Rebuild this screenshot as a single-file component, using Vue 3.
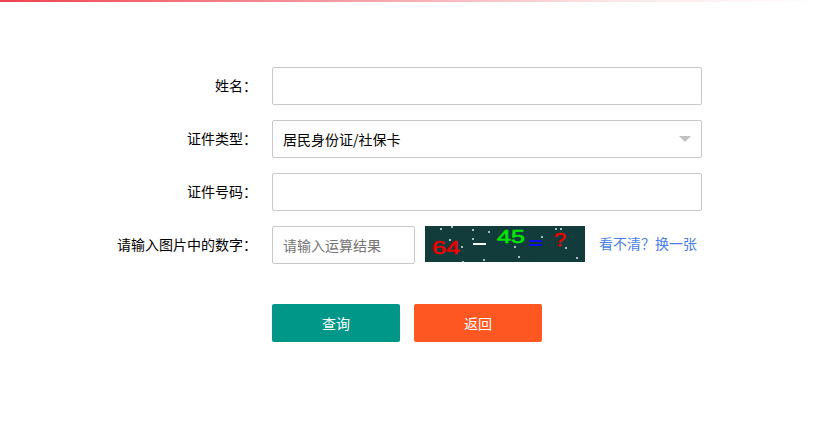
<script setup>
const dots = [
  [15, 2], [26, 0], [47, 3], [63, 5], [24, 13], [47, 12], [36, 20], [116, 10],
  [130, 2], [135, 2], [140, 21], [89, 20], [93, 30], [151, 31], [37, 35], [58, 33]
].map(([x, y], id) => ({ id, x, y }))
</script>

<template>
  <div class="page">
    <div class="topbar"></div>
    <form class="form" @submit.prevent>
      <div class="row">
        <label class="label">姓名：</label>
        <input class="field" type="text" />
      </div>
      <div class="row">
        <label class="label">证件类型：</label>
        <div class="field select">
          <span>居民身份证/社保卡</span>
          <i class="caret"></i>
        </div>
      </div>
      <div class="row">
        <label class="label">证件号码：</label>
        <input class="field" type="text" />
      </div>
      <div class="row">
        <label class="label">请输入图片中的数字：</label>
        <input class="field captcha-input" type="text" placeholder="请输入运算结果" />
        <svg class="captcha" width="160" height="36" viewBox="0 0 160 36">
          <rect width="160" height="36" fill="#123c3c" />
          <rect v-for="d in dots" :key="d.id" :x="d.x" :y="d.y" width="2" height="2" fill="#a9bdba" />
          <text x="7" y="28" class="c-text" fill="#f00000" stroke="#f00000" textLength="28" lengthAdjust="spacingAndGlyphs">64</text>
          <rect x="48" y="17" width="13" height="2" fill="#f2f6f5" />
          <text x="72" y="17" class="c-text" fill="#00e800" stroke="#00e800" textLength="28" lengthAdjust="spacingAndGlyphs">45</text>
          <rect x="104" y="14" width="13" height="2" fill="#1010e0" />
          <rect x="104" y="18" width="13" height="2" fill="#1010e0" />
          <text x="129" y="20" class="c-text" fill="#f00000" stroke="#f00000" textLength="12" lengthAdjust="spacingAndGlyphs">?</text>
        </svg>
        <a class="refresh">看不清？换一张</a>
      </div>
      <div class="actions">
        <button class="btn query" type="button">查询</button>
        <button class="btn back" type="button">返回</button>
      </div>
    </form>
  </div>
</template>

<style scoped>
.page {
  width: 819px;
  height: 424px;
  background: #fff;
  overflow: hidden;
  font-family: "Noto Sans CJK SC", "Liberation Sans", sans-serif;
  font-size: 14px;
  color: #000;
}
.topbar {
  height: 2px;
  background: linear-gradient(90deg, #f0434f 0%, #f6a3aa 45%, #fbe6e8 75%, #ffffff 100%);
}
.form {
  display: flex;
  flex-direction: column;
  gap: 15px;
  padding-top: 65px;
}
.row {
  display: flex;
  align-items: flex-start;
  height: 38px;
}
.label {
  width: 257px;
  margin-right: 15px;
  flex: none;
  line-height: 36px;
  text-align: right;
}
.field {
  box-sizing: border-box;
  width: 430px;
  height: 38px;
  padding: 0 10px;
  border: 1px solid #c9c9c9;
  border-radius: 2px;
  background: #fff;
  font: inherit;
  color: inherit;
  outline: none;
}
.select {
  display: flex;
  align-items: center;
  justify-content: space-between;
}
.caret {
  width: 0;
  height: 0;
  border-style: solid;
  border-width: 6px 6px 0;
  border-color: #c2c2c2 transparent transparent;
}
.captcha-input {
  width: 143px;
  flex: none;
}
.captcha-input::placeholder {
  color: #757575;
}
.captcha {
  display: block;
  flex: none;
  margin-left: 10px;
}
.c-text {
  font-family: "Liberation Sans", sans-serif;
  font-size: 18px;
  font-weight: 400;
  stroke-width: 0.5px;
}
.refresh {
  margin-left: 14px;
  line-height: 34px;
  color: #4a7ee8;
  white-space: nowrap;
  cursor: pointer;
}
.actions {
  display: flex;
  gap: 14px;
  margin-top: 25px;
  padding-left: 272px;
}
.btn {
  width: 128px;
  height: 38px;
  border: 0;
  border-radius: 2px;
  font: inherit;
  color: #fff;
  cursor: pointer;
}
.query {
  background: #009688;
}
.back {
  background: #ff5722;
}
</style>
